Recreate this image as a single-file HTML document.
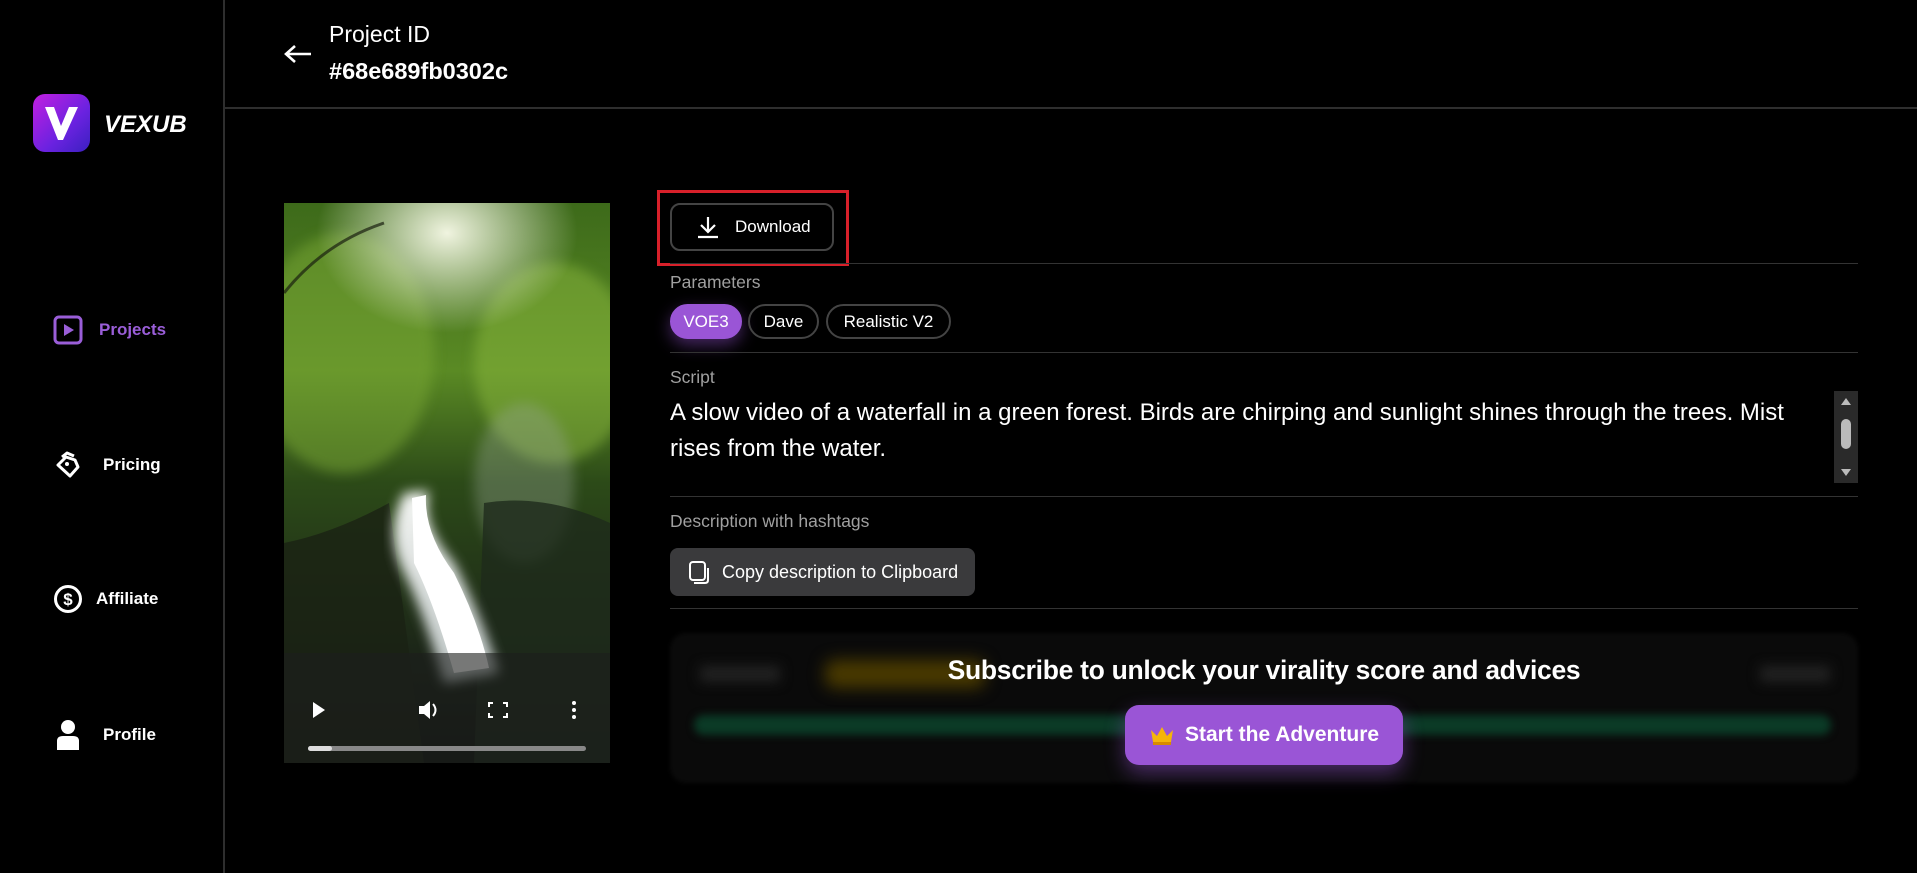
<!DOCTYPE html>
<html><head><meta charset="utf-8"><style>
*{margin:0;padding:0;box-sizing:border-box}
body{width:1917px;height:873px;background:#000;font-family:"Liberation Sans",sans-serif;color:#fff;position:relative;overflow:hidden}
.abs{position:absolute}
.side{left:223px;top:0;width:2px;height:873px;background:#2e2e2e}
.hline{left:225px;top:107px;right:0;height:2px;background:#2e2e2e}
.nav{position:absolute;left:53px;display:flex;align-items:center;font-weight:bold;font-size:17px}
.sep{position:absolute;left:670px;width:1188px;height:1px;background:#333}
.lbl{position:absolute;left:670px;font-size:17.5px;color:#a0a0a0}
.chip{position:absolute;top:304px;height:35px;border:2px solid #444;border-radius:18px;font-size:17px;display:flex;align-items:center;justify-content:center}
</style></head><body>
<div class="abs side"></div>
<div class="abs hline"></div>

<div class="abs" style="left:33px;top:94px;width:57px;height:58px;border-radius:12px;background:linear-gradient(135deg,#c21fe0,#6a22e0 60%,#3a20c0)">
<svg width="57" height="58" viewBox="0 0 57 58"><path d="M12 13 L21 13 L28 32 L36 13 L45 13 L30 46 L25 46 Z" fill="#fff"/></svg></div>
<div class="abs" style="left:104px;top:111px;font-size:24px;font-weight:bold;font-style:italic">VEXUB</div>

<svg class="abs" style="left:283px;top:44px" width="30" height="20" viewBox="0 0 30 20"><path d="M28 10H4M12 2L3 10L12 18" stroke="#fff" stroke-width="2.6" fill="none"/></svg>
<div class="abs" style="left:329px;top:21px;font-size:23px">Project ID</div>
<div class="abs" style="left:329px;top:58px;font-size:23.5px;font-weight:bold">#68e689fb0302c</div>

<div class="nav" style="top:315px;color:#9a5ed8">
<svg width="30" height="30" viewBox="0 0 30 30"><rect x="2" y="2" width="26" height="26" rx="4" stroke="#9a5ed8" stroke-width="3" fill="none"/><path d="M11 9L21 15L11 21Z" fill="#9a5ed8"/></svg>
<span style="margin-left:16px">Projects</span></div>
<div class="nav" style="top:450px">
<svg width="30" height="30" viewBox="0 0 30 30"><path d="M5 15L13 7L22 10L25 17L17 26Z" stroke="#fff" stroke-width="3" fill="none" stroke-linejoin="round"/><circle cx="14" cy="14" r="2" fill="#fff"/><path d="M9 7L14 3L21 6" stroke="#fff" stroke-width="3" fill="none" stroke-linejoin="round"/></svg>
<span style="margin-left:20px">Pricing</span></div>
<div class="nav" style="top:584px">
<svg width="30" height="30" viewBox="0 0 30 30"><circle cx="15" cy="15" r="12.5" stroke="#fff" stroke-width="3" fill="none"/><text x="15" y="21" font-size="17" font-weight="bold" text-anchor="middle" fill="#fff" font-family="Liberation Sans">$</text></svg>
<span style="margin-left:13px">Affiliate</span></div>
<div class="nav" style="top:719px">
<svg width="30" height="32" viewBox="0 0 30 32"><circle cx="15" cy="8" r="7" fill="#fff"/><path d="M4 31V22Q4 17 10 17H20Q26 17 26 22V31Z" fill="#fff"/></svg>
<span style="margin-left:20px">Profile</span></div>

<div class="abs" style="left:284px;top:203px;width:326px;height:560px;overflow:hidden;background:#1a2a12">
<svg width="326" height="560" viewBox="0 0 326 560">
<defs>
<radialGradient id="sky" cx="0.5" cy="0.12" r="0.4"><stop offset="0" stop-color="#f0f4e0"/><stop offset="1" stop-color="#f0f4e0" stop-opacity="0"/></radialGradient>
<linearGradient id="bg" x1="0" y1="0" x2="0" y2="1"><stop offset="0" stop-color="#3d6a1a"/><stop offset="0.3" stop-color="#5a8a24"/><stop offset="0.5" stop-color="#2c4a18"/><stop offset="0.8" stop-color="#1c2618"/><stop offset="1" stop-color="#101410"/></linearGradient>
<linearGradient id="wf" x1="0" y1="0" x2="0" y2="1"><stop offset="0" stop-color="#fff"/><stop offset="1" stop-color="#c8d0d0"/></linearGradient>
<filter id="b"><feGaussianBlur stdDeviation="6"/></filter>
</defs>
<rect width="326" height="560" fill="url(#bg)"/>
<ellipse cx="60" cy="150" rx="90" ry="120" fill="#7aa834" opacity="0.5" filter="url(#b)"/>
<ellipse cx="270" cy="160" rx="80" ry="100" fill="#8ab83c" opacity="0.5" filter="url(#b)"/>
<rect width="326" height="250" fill="url(#sky)"/>
<path d="M0 90 Q40 40 100 20" stroke="#1a2010" stroke-width="3" fill="none" opacity="0.7"/>
<ellipse cx="240" cy="280" rx="50" ry="80" fill="#9aa898" opacity="0.35" filter="url(#b)"/>
<path d="M105 300 Q50 330 0 340 V560 H140 Z" fill="#1a2214" opacity="0.8"/>
<path d="M200 300 Q260 290 326 320 V560 H190 Z" fill="#1e2a1c" opacity="0.8"/>
<path d="M120 290 L145 288 Q135 320 170 360 Q200 420 215 470 L160 480 Q140 410 120 370 Q100 330 120 290Z" fill="url(#wf)" filter="url(#b)" opacity="0.95"/>
<path d="M128 295 L142 292 Q140 330 170 370 Q195 420 205 465 L170 470 Q150 400 130 360Z" fill="#fff"/>
<rect y="450" width="326" height="110" fill="#1c1e1c" opacity="0.6"/>
<path d="M29 499L41 507L29 515Z" fill="#fff"/>
<path d="M135 503H140L146 498V516L140 511H135Z" fill="#fff"/><path d="M149 501Q154 507 149 513" stroke="#fff" stroke-width="2" fill="none"/>
<path d="M209 500H205V504M219 500H223V504M209 514H205V510M219 514H223V510" stroke="#fff" stroke-width="2" fill="none"/>
<circle cx="290" cy="500" r="2" fill="#fff"/><circle cx="290" cy="507" r="2" fill="#fff"/><circle cx="290" cy="514" r="2" fill="#fff"/>
<rect x="24" y="543" width="278" height="5" rx="2.5" fill="#888"/>
<rect x="24" y="543" width="24" height="5" rx="2.5" fill="#ddd"/>
</svg></div>

<div class="abs" style="left:657px;top:190px;width:192px;height:76px;border:3px solid #d8202a"></div>
<div class="abs" style="left:670px;top:203px;width:164px;height:48px;border:2px solid #444;border-radius:10px;display:flex;align-items:center;padding-left:23px;font-size:17px">
<svg width="26" height="24" viewBox="0 0 26 24"><path d="M13 2V16M6 10L13 17L20 10M3 22H23" stroke="#fff" stroke-width="2.2" fill="none"/></svg>
<span style="margin-left:14px">Download</span></div>

<div class="sep" style="top:263px"></div>
<div class="lbl" style="top:272px">Parameters</div>
<div class="chip" style="left:670px;width:72px;background:#9a55d6;border-color:#9a55d6;box-shadow:0 6px 16px rgba(154,85,214,0.45)">VOE3</div>
<div class="chip" style="left:748px;width:71px">Dave</div>
<div class="chip" style="left:826px;width:125px">Realistic V2</div>
<div class="sep" style="top:352px"></div>
<div class="lbl" style="top:367px">Script</div>
<div class="abs" style="left:670px;top:395px;width:1140px;font-size:24px;line-height:36px">A slow video of a waterfall in a green forest. Birds are chirping and sunlight shines through the trees. Mist rises from the water.</div>
<div class="abs" style="left:1834px;top:391px;width:24px;height:92px;background:#2a2a2a">
<svg width="24" height="92" viewBox="0 0 24 92"><path d="M7 14L12 7L17 14Z" fill="#bbb"/><rect x="7" y="28" width="10" height="30" rx="5" fill="#bbb"/><path d="M7 78L12 85L17 78Z" fill="#bbb"/></svg></div>
<div class="sep" style="top:496px"></div>
<div class="lbl" style="top:511px">Description with hashtags</div>
<div class="abs" style="left:670px;top:548px;width:305px;height:48px;background:#3a3a3c;border-radius:8px;display:flex;align-items:center;padding-left:18px;font-size:18px">
<svg width="22" height="24" viewBox="0 0 22 24"><rect x="2" y="2" width="15" height="18" rx="3" stroke="#fff" stroke-width="2" fill="none"/><path d="M20 8V20Q20 23 17 23H6" stroke="#fff" stroke-width="2" fill="none"/></svg>
<span style="margin-left:12px">Copy description to Clipboard</span></div>
<div class="sep" style="top:608px"></div>

<div class="abs" style="left:670px;top:633px;width:1188px;height:150px;background:#0a0a0a;border-radius:16px;filter:blur(2px)"></div>
<div class="abs" style="left:694px;top:715px;width:1137px;height:20px;background:#0b3a26;border-radius:10px;filter:blur(4px)"></div>
<div class="abs" style="left:825px;top:660px;width:160px;height:28px;background:#4a3a00;border-radius:10px;filter:blur(8px)"></div>
<div class="abs" style="left:700px;top:666px;width:80px;height:16px;background:#222;filter:blur(6px)"></div>
<div class="abs" style="left:1760px;top:666px;width:70px;height:16px;background:#222;filter:blur(6px)"></div>
<div class="abs" style="left:670px;top:655px;width:1188px;text-align:center;font-size:26.5px;font-weight:bold;letter-spacing:-0.3px">Subscribe to unlock your virality score and advices</div>
<div class="abs" style="left:1125px;top:705px;width:278px;height:60px;background:#9a55d6;border-radius:14px;box-shadow:0 8px 20px rgba(154,85,214,0.45);display:flex;align-items:center;justify-content:center;font-size:21px;font-weight:bold">
<svg width="26" height="22" viewBox="0 0 26 22"><path d="M2 6L8 12L13 3L18 12L24 6L22 18H4Z" fill="#f5b50a"/><rect x="4" y="18" width="18" height="3" fill="#d88a00"/></svg>
<span style="margin-left:10px">Start the Adventure</span></div>
</body></html>
